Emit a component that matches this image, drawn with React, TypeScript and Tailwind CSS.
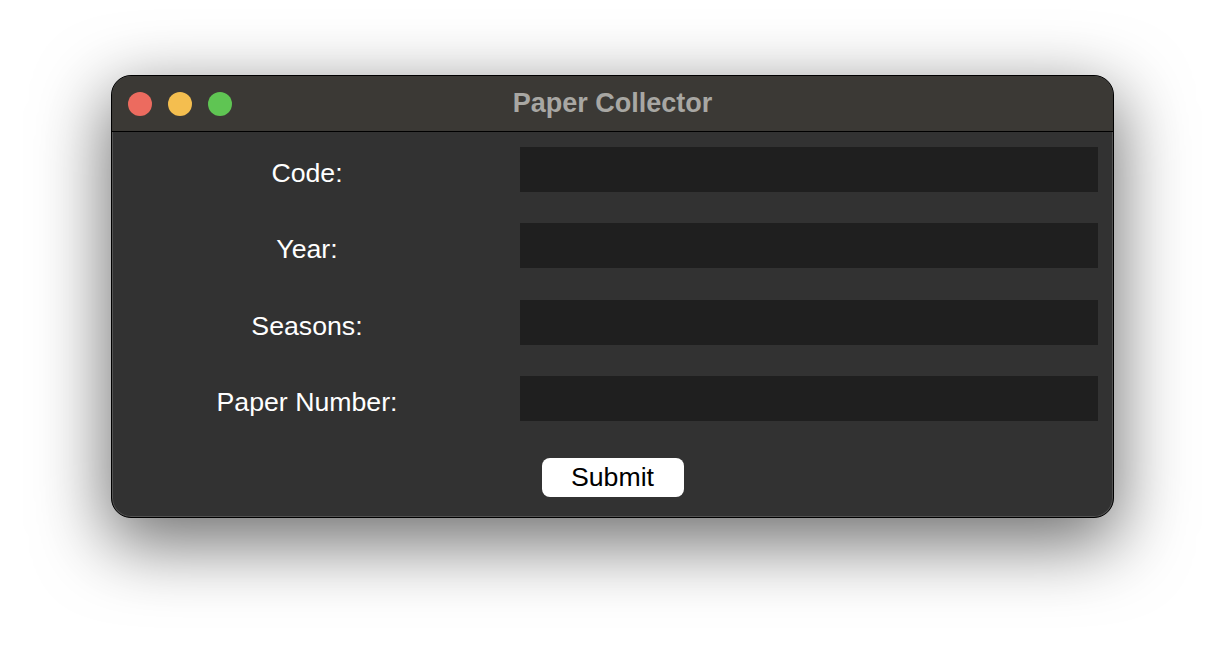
export default function App() {
  const rows = ["Code:", "Year:", "Seasons:", "Paper Number:"];
  return (
    <div className="w-[1226px] h-[666px] bg-white overflow-hidden pt-[75px] pl-[111px]" style={{ fontFamily: '"Liberation Sans", Arial, sans-serif' }}>
      <div className="w-[1003px] h-[443px] rounded-[20px] border border-black bg-[#323232] overflow-hidden flex flex-col shadow-[0_22px_70px_4px_rgba(0,0,0,0.56)]">
        <div className="rounded-[19px] flex flex-col h-full shadow-[inset_0_0_0_1px_rgba(255,255,255,0.16)]">
          <div className="h-[56px] shrink-0 grid grid-cols-[1fr_auto_1fr] items-center bg-[#3b3935] border-b border-black rounded-t-[19px]">
            <div className="flex items-center gap-[16px] pl-[16px]">
              <span className="block w-[24px] h-[24px] rounded-full bg-[#ec6b5f]" />
              <span className="block w-[24px] h-[24px] rounded-full bg-[#f4be4f]" />
              <span className="block w-[24px] h-[24px] rounded-full bg-[#5fc553]" />
            </div>
            <div className="text-[27px] font-bold text-[#a8a7a3] leading-none">Paper Collector</div>
            <div />
          </div>
          <div className="flex flex-col pt-[15px] gap-[31.3px]">
            {rows.map((r) => (
              <div key={r} className="flex h-[45px]">
                <div className="w-[390px] shrink-0 flex items-center justify-center pt-[7px] text-[26.7px] text-white">{r}</div>
                <div className="ml-[18px] mr-[15px] flex-1 bg-[#1f1f1f]" />
              </div>
            ))}
          </div>
          <div className="flex justify-center mt-[37px]">
            <button className="w-[142px] h-[39px] rounded-[8px] bg-white text-black text-[26.7px] flex items-center justify-center leading-none">Submit</button>
          </div>
        </div>
      </div>
    </div>
  );
}
